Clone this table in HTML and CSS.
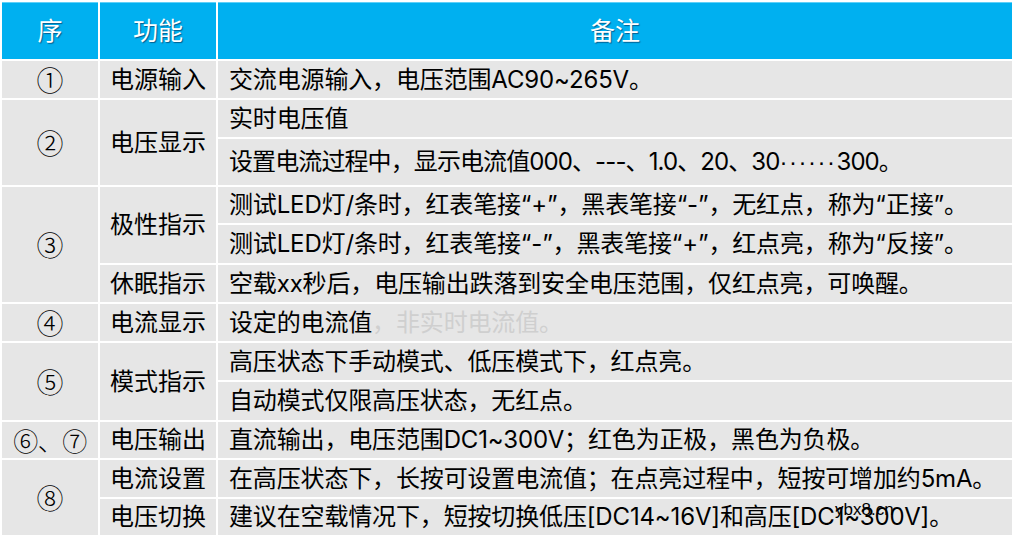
FILE: index.html
```html
<!DOCTYPE html>
<html lang="zh-CN">
<head>
<meta charset="utf-8">
<title>功能说明</title>
<link rel="stylesheet" href="styles.css">
</head>
<body>
<div class="wrap">
<table class="spec">
  <colgroup>
    <col class="c1"><col class="c2"><col class="c3">
  </colgroup>
  <thead>
    <tr class="head"><th>序</th><th>功能</th><th>备注</th></tr>
  </thead>
  <tbody>
    <tr><td class="num">①</td><td class="fn">电源输入</td><td class="note">交流电源输入，电压范围AC90~265V。</td></tr>
    <tr><td class="num" rowspan="2">②</td><td class="fn" rowspan="2">电压显示</td><td class="note">实时电压值</td></tr>
    <tr class="tall"><td class="note tight">设置电流过程中，显示电流值000、---、1.0、20、30<span class="dots">······</span>300。</td></tr>
    <tr class="short"><td class="num" rowspan="3">③</td><td class="fn" rowspan="2">极性指示</td><td class="note">测试LED灯/条时，红表笔接“+”，黑表笔接“-”，无红点，称为“正接”。</td></tr>
    <tr class="r38"><td class="note">测试LED灯/条时，红表笔接“-”，黑表笔接“+”，红点亮，称为“反接”。</td></tr>
    <tr><td class="fn">休眠指示</td><td class="note">空载xx秒后，电压输出跌落到安全电压范围，仅红点亮，可唤醒。</td></tr>
    <tr><td class="num">④</td><td class="fn">电流显示</td><td class="note">设定的电流值<span class="faint">，非实时电流值。</span></td></tr>
    <tr><td class="num" rowspan="2">⑤</td><td class="fn" rowspan="2">模式指示</td><td class="note">高压状态下手动模式、低压模式下，红点亮。</td></tr>
    <tr class="r38"><td class="note">自动模式仅限高压状态，无红点。</td></tr>
    <tr class="short"><td class="num pair">⑥、⑦</td><td class="fn">电压输出</td><td class="note">直流输出，电压范围DC1~300V；红色为正极，黑色为负极。</td></tr>
    <tr><td class="num" rowspan="2">⑧</td><td class="fn">电流设置</td><td class="note">在高压状态下，长按可设置电流值；在点亮过程中，短按可增加约5mA。</td></tr>
    <tr class="short"><td class="fn">电压切换</td><td class="note">建议在空载情况下，短按切换低压[DC14~16V]和高压[DC1~300V]。</td></tr>
  </tbody>
</table>
<span class="mark">ybx8.cn</span>
</div>
</body>
</html>
```
FILE: styles.css
```css
html, body {
  margin: 0;
  padding: 0;
  background: #ffffff;
}
.wrap {
  position: relative;
  width: 1014px;
  height: 547px;
}
.spec {
  table-layout: fixed;
  width: 1014px;
  border-collapse: separate;
  border-spacing: 2px;
  background: #ffffff;
  font-family: "Inter", "Noto Sans CJK SC", sans-serif;
  font-size: 24px;
  color: #000;
}
.c1 { width: 96px; }
.c2 { width: 116px; }
.c3 { width: auto; }
.spec th, .spec td {
  padding: 0;
  vertical-align: middle;
  line-height: 1;
  overflow: hidden;
  white-space: nowrap;
}
.head { height: 57px; }
.spec th {
  background: #00b0f0;
  color: #ffffff;
  font-weight: normal;
  text-align: center;
  font-size: 25px;
  text-shadow: 1px 1px 1px rgba(0, 40, 80, 0.6);
  border-top: 1px solid #5fd0f8;
}
.spec td {
  background: #e6e6e6;
}
.spec tbody tr { height: 37px; }
.spec tbody tr.tall { height: 46px; }
.spec tbody tr.short { height: 36px; }
.spec tbody tr.r38 { height: 38px; }
.num {
  text-align: center;
  font-family: "Noto Sans CJK SC", sans-serif;
  font-weight: 300;
  font-size: 27px;
}
.num.pair { font-size: 25px; letter-spacing: -0.5px; }
.fn { text-align: center; }
.note {
  text-align: left;
  padding-left: 11px !important;
  letter-spacing: -0.15px;
}
.note.tight { letter-spacing: -0.9px; }
.dots {
  font-family: "Liberation Sans", sans-serif;
  letter-spacing: 1.5px;
}
.faint { color: #cfcfcf; }
.mark {
  position: absolute;
  left: 835px;
  top: 500px;
  font-family: "Liberation Sans", sans-serif;
  font-size: 17px;
  color: #000;
}
```
